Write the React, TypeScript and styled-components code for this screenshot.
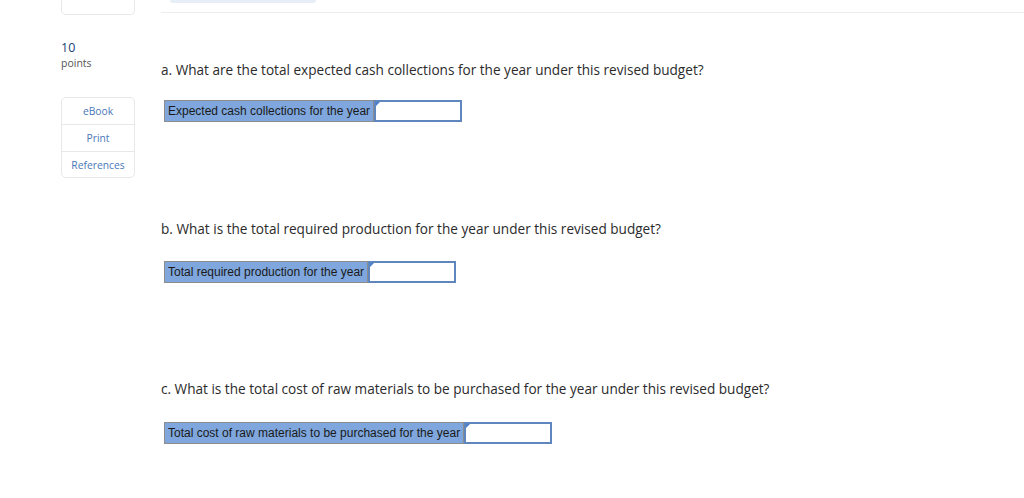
import styled, { createGlobalStyle } from "styled-components";

const GlobalStyle = createGlobalStyle`
  html, body {
    margin: 0;
    padding: 0;
    background: #fff;
  }
  body {
    font-family: "Open Sans", "Lato", sans-serif;
    color: #333;
  }
`;

const Page = styled.div`
  display: flex;
  width: 1024px;
  height: 498px;
  overflow: hidden;
`;

const Sidebar = styled.aside`
  margin-left: 61px;
  width: 74px;
  flex-shrink: 0;
`;

const TopCard = styled.div`
  height: 14px;
  border: 1px solid #e8e8e8;
  border-top: none;
  border-radius: 0 0 5px 5px;
`;

const Points = styled.div`
  margin-top: 25px;

  .value {
    font-size: 12.5px;
    line-height: 16px;
    color: #1d3f78;
  }

  .label {
    font-size: 10.5px;
    line-height: 14px;
    color: #555;
  }
`;

const ToolCard = styled.div`
  margin-top: 27px;
  border: 1px solid #e8e8e8;
  border-radius: 5px;
  display: flex;
  flex-direction: column;
`;

const ToolItem = styled.div<{ $h: number }>`
  height: ${(p) => p.$h}px;
  display: flex;
  align-items: center;
  justify-content: center;
  font-size: 10.3px;
  color: #4a78b8;

  & + & {
    border-top: 1px solid #e8e8e8;
  }
`;

const Main = styled.main`
  flex: 1;
  margin-left: 26px;
`;

const Header = styled.div`
  height: 12px;
  border-bottom: 1px solid #ececec;
`;

const Pill = styled.div`
  margin-left: 9px;
  width: 146px;
  height: 3px;
  background: #e8eef7;
  border-radius: 0 0 8px 8px;
`;

const Question = styled.section<{ $top: number }>`
  margin-top: ${(p) => p.$top}px;
`;

const Prompt = styled.p`
  margin: 0;
  font-size: 13.6px;
  line-height: 16px;
  color: #2b2b2b;
`;

const AnswerRow = styled.div<{ $gap: number }>`
  margin-top: ${(p) => p.$gap}px;
  margin-left: 3px;
  display: flex;
  height: 22px;
`;

const LabelCell = styled.div`
  display: flex;
  align-items: center;
  padding: 0 3px;
  background: #7fa7dd;
  border: 1px solid #8c8c8c;
  font-family: "Liberation Sans", Arial, sans-serif;
  font-size: 12px;
  color: #1a1a1a;
  white-space: nowrap;
`;

const InputCell = styled.div`
  position: relative;
  width: 88px;
  box-sizing: border-box;
  border: 2px solid #5f86bd;
  background: #fff;

  &::before {
    content: "";
    position: absolute;
    top: 0;
    left: 0;
    border-top: 4px solid #4a7fd0;
    border-right: 4px solid transparent;
  }
`;

const questions = [
  {
    top: 49,
    gap: 22,
    prompt:
      "a. What are the total expected cash collections for the year under this revised budget?",
    label: "Expected cash collections for the year",
  },
  {
    top: 99,
    gap: 24,
    prompt: "b. What is the total required production for the year under this revised budget?",
    label: "Total required production for the year",
  },
  {
    top: 98,
    gap: 25,
    prompt:
      "c. What is the total cost of raw materials to be purchased for the year under this revised budget?",
    label: "Total cost of raw materials to be purchased for the year",
  },
];

export default function App() {
  return (
    <>
      <GlobalStyle />
      <Page>
        <Sidebar>
          <TopCard />
          <Points>
            <div className="value">10</div>
            <div className="label">points</div>
          </Points>
          <ToolCard>
            <ToolItem $h={26}>eBook</ToolItem>
            <ToolItem $h={26}>Print</ToolItem>
            <ToolItem $h={25}>References</ToolItem>
          </ToolCard>
        </Sidebar>
        <Main>
          <Header>
            <Pill />
          </Header>
          {questions.map((q) => (
            <Question key={q.label} $top={q.top}>
              <Prompt>{q.prompt}</Prompt>
              <AnswerRow $gap={q.gap}>
                <LabelCell>{q.label}</LabelCell>
                <InputCell />
              </AnswerRow>
            </Question>
          ))}
        </Main>
      </Page>
    </>
  );
}
